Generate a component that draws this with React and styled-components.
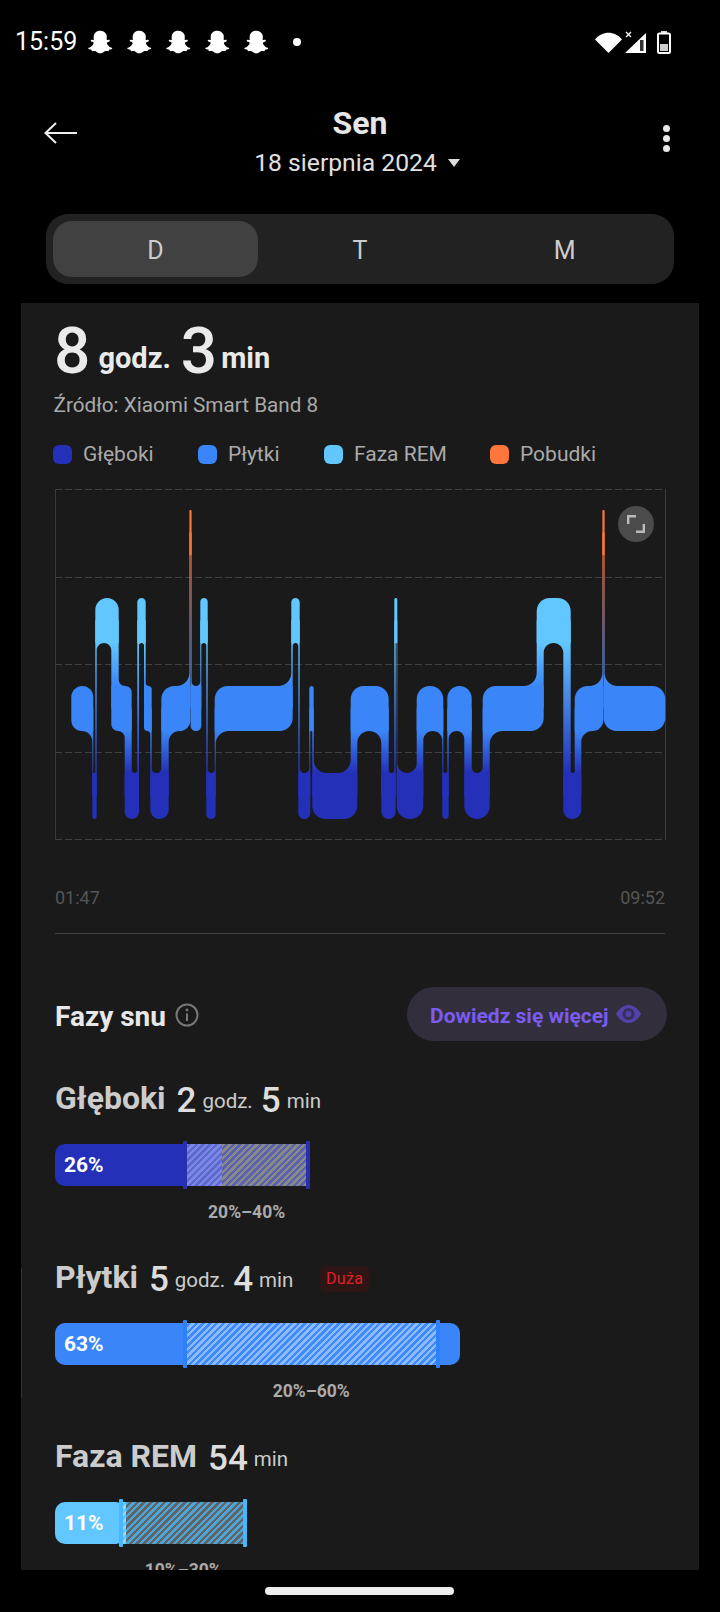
import React from 'react';
import styled, { createGlobalStyle } from 'styled-components';
import { FaSnapchatGhost } from 'react-icons/fa';

const GlobalStyle = createGlobalStyle`
  html, body { margin: 0; padding: 0; background: #000; }
  * { box-sizing: border-box; }
`;

const Page = styled.div`
  width: 720px; height: 1612px; background: #000; overflow: hidden;
  display: flex; flex-direction: column;
  font-family: Roboto, "Liberation Sans", sans-serif; color: #eee;
`;
const StatusBar = styled.div`
  height: 84px; flex: none; display: flex; align-items: center; justify-content: space-between;
  padding: 0 49px 0 15px;
`;
const StatusLeft = styled.div`display: flex; align-items: center; gap: 14.5px;`;
const Clock = styled.span`font-size: 25px; color: #fff; margin-right: -3.5px; line-height: 28px;`;
const Ghost = styled(FaSnapchatGhost)`width: 24.5px; height: 24px; color: #fff; display: block;`;
const NotifDot = styled.span`width: 8px; height: 8px; border-radius: 50%; background: #fff; margin-left: 10px;`;
const StatusRight = styled.div`display: flex; align-items: center;`;
const StatusIcon = styled.svg`display: block; flex: none; margin-left: ${p => p.$ml || 0}px;`;

const Header = styled.header`
  height: 130px; flex: none; display: grid; grid-template-columns: 1fr auto 1fr;
`;
const BackSlot = styled.div`padding: 38px 0 0 44px;`;
const MenuSlot = styled.div`display: flex; justify-content: flex-end; padding: 41px 50.5px 0 0;`;
const TitleBlock = styled.div`display: flex; flex-direction: column; align-items: center; padding-top: 21px;`;
const Title = styled.h1`margin: 0; font-size: 32px; line-height: 36px; font-weight: 700; color: #e6e6e6;`;
const DateRow = styled.div`
  display: flex; align-items: center; gap: 11px; margin: 7px 6px 0 0;
  font-size: 24.7px; line-height: 30px; color: #e0e0e0;
`;
const Caret = styled.span`
  width: 0; height: 0; border-left: 6px solid transparent; border-right: 6px solid transparent;
  border-top: 8px solid #ddd; margin-top: 0;
`;
const Kebab = styled.div`display: flex; flex-direction: column; gap: 3px;`;
const KebabDot = styled.span`width: 7px; height: 7px; border-radius: 50%; background: #e8e8e8;`;

const Segmented = styled.div`
  flex: none; height: 70px; margin: 0 46px 19px; padding: 7px; border-radius: 22px;
  background: #222; display: flex;
`;
const Segment = styled.div`
  flex: 1; display: flex; align-items: center; justify-content: center; border-radius: 19px;
  padding-top: 2px; font-size: 25px; color: #ccc; background: ${p => (p.$active ? '#414141' : 'transparent')};
`;

const Card = styled.main`
  position: relative; flex: none; height: 1267px; margin: 0 21px; padding: 17px 32px 0 34px;
  background: #1a1a1a; overflow: hidden;
`;
const ScrollThumb = styled.div`
  position: absolute; left: 0; top: 965px; width: 1px; height: 130px; background: #333;
`;
const TotalRow = styled.div`display: flex; align-items: center; height: 64px; margin-left: -1px;`;
const TotalNum = styled.span`font-size: 64px; line-height: 64px; color: #eaeaea; font-weight: 500;`;
const TotalUnit = styled.span`
  font-size: 29px; line-height: 34px; font-weight: 700; color: #eaeaea;
  margin: 12.8px ${p => p.$mr}px 0 ${p => p.$ml}px;
`;
const Source = styled.div`font-size: 20.7px; line-height: 24px; color: #aaa; margin: 9px 0 0 -1.5px;`;
const Legend = styled.div`display: flex; align-items: center; margin: 25px 0 0 -2px; height: 24px;`;
const LegendItem = styled.div`display: flex; align-items: center; gap: 11px; width: ${p => p.$w}px;`;
const Swatch = styled.span`width: 19px; height: 19px; border-radius: 6px; background: ${p => p.$c};`;
const LegendText = styled.span`font-size: 21px; color: #aaa; line-height: 24px;`;

const ChartWrap = styled.div`position: relative; width: 612px; height: 353px; margin-top: 22px;`;
const ChartSvg = styled.svg`display: block; overflow: visible;`;
const ExpandBtn = styled.div`
  position: absolute; top: 18px; right: 13px; width: 36px; height: 36px; border-radius: 50%;
  background: #4b4b4b; display: flex; align-items: center; justify-content: center;
`;
const TimeRow = styled.div`
  display: flex; justify-content: space-between; margin: 45px 2px 0 0;
  font-size: 18px; line-height: 24px; color: #555;
`;
const Divider = styled.div`height: 1px; background: #444; margin: 23px 2px 0 0;`;

const FazyRow = styled.div`display: flex; align-items: center; justify-content: space-between; margin-top: 53px; height: 54px;`;
const FazyLeft = styled.div`display: flex; align-items: center; gap: 9px;`;
const FazyTitle = styled.h2`margin: 4px 0 0; font-size: 28px; font-weight: 700; color: #e8e8e8;`;
const FazyInfo = styled.svg`display: block; margin-top: 2px;`;
const MoreBtn = styled.div`
  width: 260px; height: 54px; border-radius: 27px; background: #322e3c;
  display: flex; align-items: center; gap: 7px; padding-left: 23px;
  font-size: 21px; font-weight: 700; color: #7a5cf0;
`;
const MoreLabel = styled.span`margin-top: 4px;`;

const Phase = styled.section`padding-top: ${p => (p.$first ? 37 : 34)}px;`;
const PhaseHead = styled.div`display: flex; align-items: center; height: 40px; line-height: 40px;`;
const PhaseName = styled.span`font-size: 32px; font-weight: 700; color: #ccc; margin-right: 11px;`;
const PhaseNum = styled.span`font-size: 35px; font-weight: 500; color: #ddd; margin: 6px 6px 0 0;`;
const PhaseUnit = styled.span`font-size: 20.5px; color: #ccc; margin: 5.2px 8px 0 0;`;
const Badge = styled.span`
  margin: 4px 0 0 19px; height: 26px; padding: 0 5.5px; border-radius: 5px; background: #2e1616;
  color: #e02020; font-size: 16px; line-height: 26px; letter-spacing: 0.4px;
`;
const Track = styled.div`position: relative; width: 643px; height: 42px; margin-top: 26px;`;
const Fill = styled.div`
  height: 100%; width: ${p => p.$pct}%; background: ${p => p.$c}; border-radius: 10px;
  display: flex; align-items: center; padding-left: 9px;
  font-size: 21px; font-weight: 700; color: #fff;
`;
const Hatch = styled.div`
  position: absolute; top: 0; bottom: 0; left: ${p => p.$from}%; width: ${p => p.$w}%;
  background: repeating-linear-gradient(135deg, ${p => p.$a} 0 2.4px, ${p => p.$b} 2.4px 4.8px);
`;
const Tick = styled.span`
  position: absolute; top: -3px; bottom: -3px; left: ${p => p.$at}%; width: 4px; margin-left: -2px;
  border-radius: 1px; background: ${p => p.$c};
`;
const RangeLabel = styled.div`
  margin: 15px 0 0 ${p => p.$from}%; width: ${p => p.$w}%; max-width: 100%;
  white-space: nowrap; text-align: center;
  font-size: 17.5px; line-height: 22px; font-weight: 700; color: #aaa;
`;
const PhaseBody = styled.div`width: 643px;`;

const Footer = styled.div`flex: 1; display: flex; align-items: center; justify-content: center;`;
const HomeBar = styled.div`width: 189px; height: 8px; border-radius: 4px; background: #eee; margin-right: 1px;`;

/* ---------- sleep chart geometry ---------- */
const COL = { A: '#ff763c', R: '#62c6ff', L: '#3a86f8', D: '#2430b8' };
const TOP = { A: 510, R: 598, L: 686, D: 773 };
const BOT = { A: 555, R: 643, L: 731, D: 819 };
const RANK = { A: 3, R: 2, L: 1, D: 0 };
const MAX_R = 13;
const SEGS = [
  [71.3, 93.3, 'L'], [92.3, 96.7, 'D'], [95.3, 118.7, 'R'], [111.3, 131.7, 'L'], [124.7, 139, 'D'],
  [137.3, 145.7, 'R'], [144, 151.7, 'L'], [150.3, 168.7, 'D'], [161.3, 190.4, 'L'], [189.4, 191.6, 'A'],
  [190.6, 201.3, 'L'], [200.3, 207.7, 'R'], [206.3, 215.7, 'D'], [214.7, 292.7, 'L'], [291.3, 299.7, 'R'],
  [298.3, 310.3, 'D'], [309.3, 313.7, 'L'], [312.3, 357.3, 'D'], [350.7, 388.7, 'L'], [381.3, 395.7, 'D'],
  [394.3, 397.3, 'R'], [396.7, 423.3, 'D'], [416.7, 443.3, 'L'], [442.3, 448.7, 'D'], [447.3, 471.7, 'L'],
  [464.3, 489.7, 'D'], [482.7, 543.7, 'L'], [536.7, 570.7, 'R'], [563.3, 581.3, 'D'], [574.7, 603.4, 'L'],
  [602.4, 604.6, 'A'], [603.6, 665.3, 'L'],
];
const f = n => +n.toFixed(2);
const curve = (x0, y0, cx, cy, x1, y1) => {
  const k = 0.552;
  return `C${f(x0 + (cx - x0) * k)} ${f(y0 + (cy - y0) * k)} ${f(x1 + (cx - x1) * k)} ${f(y1 + (cy - y1) * k)} ${f(x1)} ${f(y1)}`;
};
const fillet = (X, Y, dx, dy, r) =>
  `M${f(X)} ${f(Y)}L${f(X + dx * r)} ${f(Y)}${curve(X + dx * r, Y, X, Y, X, Y + dy * r)}Z`;

function buildChart() {
  const solids = [];
  const links = [];
  const radii = SEGS.map(([x0, x1, lv], i) => {
    const p = SEGS[i - 1];
    const n = SEGS[i + 1];
    const pUp = p && RANK[p[2]] > RANK[lv];
    const nUp = n && RANK[n[2]] > RANK[lv];
    const pDn = p && RANK[p[2]] < RANK[lv];
    const nDn = n && RANK[n[2]] < RANK[lv];
    const rT = Math.min(MAX_R, ((nUp ? n[0] : x1) - (pUp ? p[1] : x0)) / 2);
    const rB = Math.min(MAX_R, ((nDn ? n[0] : x1) - (pDn ? p[1] : x0)) / 2);
    return { rT: Math.max(rT, 0.3), rB: Math.max(rB, 0.3), pUp, nUp, pDn, nDn };
  });
  SEGS.forEach(([x0, x1, lv], i) => {
    const t = TOP[lv];
    const b = BOT[lv];
    const { rT, rB, pUp, nUp, pDn, nDn } = radii[i];
    const tl = pUp ? 0 : rT;
    const tr = nUp ? 0 : rT;
    const bl = pDn ? 0 : rB;
    const br = nDn ? 0 : rB;
    solids.push({
      c: COL[lv],
      d: `M${f(x0 + tl)} ${t}L${f(x1 - tr)} ${t}${curve(x1 - tr, t, x1, t, x1, t + tr)}` +
        `L${f(x1)} ${f(b - br)}${curve(x1, b - br, x1, b, x1 - br, b)}` +
        `L${f(x0 + bl)} ${b}${curve(x0 + bl, b, x0, b, x0, b - bl)}` +
        `L${f(x0)} ${f(t + tl)}${curve(x0, t + tl, x0, t, x0 + tl, t)}Z`,
    });
    const n = SEGS[i + 1];
    if (!n) return;
    const nLv = n[2];
    const up = RANK[nLv] > RANK[lv];
    const U = up ? nLv : lv;
    const Lo = up ? lv : nLv;
    const cx0 = n[0];
    const cx1 = x1;
    const midU = (TOP[U] + BOT[U]) / 2;
    const midL = (TOP[Lo] + BOT[Lo]) / 2;
    let d = `M${f(cx0)} ${midU}L${f(cx1)} ${midU}L${f(cx1)} ${midL}L${f(cx0)} ${midL}Z`;
    d += up ? fillet(cx0, t, -1, -1, rT) : fillet(cx0, b, -1, 1, rB);
    const nr = radii[i + 1];
    d += up ? fillet(cx1, BOT[nLv], 1, 1, nr.rB) : fillet(cx1, TOP[nLv], 1, -1, nr.rT);
    links.push({ d, id: `g${U}${Lo}` });
  });
  return { solids, links };
}
const CHART = buildChart();
const GRADS = [['A', 'L'], ['R', 'L'], ['R', 'D'], ['L', 'D']];

function SleepChart() {
  return (
    <ChartSvg width="612" height="353" viewBox="55 488 612 353">
      <defs>
        {GRADS.map(([u, l]) => (
          <linearGradient key={u + l} id={`g${u}${l}`} gradientUnits="userSpaceOnUse" x1="0" x2="0" y1={BOT[u]} y2={TOP[l]}>
            <stop offset="0" stopColor={COL[u]} />
            <stop offset="1" stopColor={COL[l]} />
          </linearGradient>
        ))}
      </defs>
      <g stroke="#404040" strokeWidth="1" fill="none" strokeDasharray="7 3">
        <path d="M55 489.5H665M55 577.5H665M55 664.5H665M55 752.5H665M55 839.5H665" />
      </g>
      <path d="M55.5 489V840M665.5 489V840" stroke="#3a3a3a" strokeWidth="1" fill="none" />
      {CHART.solids.map((s, i) => <path key={i} d={s.d} fill={s.c} />)}
      {CHART.links.map((s, i) => <path key={i} d={s.d} fill={`url(#${s.id})`} />)}
    </ChartSvg>
  );
}

const PHASES = [
  {
    name: 'Głęboki', parts: [['2', 'godz.'], ['5', 'min']], pct: 26, from: 20.2, to: 39.4, range: '20%–40%',
    color: '#2430b8', tick: '#2a2fb0', over: ['#7c88e4', '#5c6ad0'], out: ['#8a8a8a', '#5a62ac'],
  },
  {
    name: 'Płytki', parts: [['5', 'godz.'], ['4', 'min']], pct: 63, from: 20.2, to: 59.5, range: '20%–60%',
    color: '#3a86f8', tick: '#2f80fb', over: ['#8cbcfb', '#3f8af8'], badge: 'Duża',
  },
  {
    name: 'Faza REM', parts: [['54', 'min']], pct: 11, from: 10.3, to: 29.6, range: '10%–30%',
    color: '#62c6ff', tick: '#45b8ff', over: ['#8fd6ff', '#62c6ff'], out: ['#4fa6d4', '#5e6468'],
  },
];

function PhaseBar({ data }) {
  const { pct, from, to, color, tick, over, out } = data;
  const inEnd = Math.min(pct, to);
  return (
    <Track>
      <Fill $pct={pct} $c={color}>{pct}%</Fill>
      {inEnd > from && <Hatch $from={from} $w={inEnd - from} $a={over[0]} $b={over[1]} />}
      {out && to > inEnd && <Hatch $from={inEnd} $w={to - inEnd} $a={out[0]} $b={out[1]} />}
      <Tick $at={from} $c={tick} />
      <Tick $at={to} $c={tick} />
    </Track>
  );
}

const Ghosts = [0, 1, 2, 3, 4];

export default function App() {
  return (
    <Page>
      <GlobalStyle />
      <StatusBar>
        <StatusLeft>
          <Clock>15:59</Clock>
          {Ghosts.map(i => <Ghost key={i} />)}
          <NotifDot />
        </StatusLeft>
        <StatusRight>
          <StatusIcon width="27" height="21" viewBox="0 0 27 21">
            <path d="M0 7.5C7 -1.5 20 -1.5 27 7.5L13.5 21Z" fill="#fff" />
          </StatusIcon>
          <StatusIcon $ml={3} width="21" height="22" viewBox="0 0 21 22">
            <path d="M0 22L21 2V22Z" fill="#fff" />
            <rect x="15" y="9" width="3.5" height="11" fill="#333" />
            <path d="M1 1L6 6M6 1L1 6" stroke="#fff" strokeWidth="1.3" />
          </StatusIcon>
          <StatusIcon $ml={11} width="14" height="23" viewBox="0 0 14 23">
            <rect x="4" y="0" width="6" height="3" fill="#ddd" />
            <rect x="1" y="2.5" width="12" height="19.5" rx="1.5" fill="#000" stroke="#fff" strokeWidth="2" />
            <rect x="3" y="13" width="8" height="7" fill="#ccc" />
          </StatusIcon>
        </StatusRight>
      </StatusBar>

      <Header>
        <BackSlot>
          <svg width="34" height="22" viewBox="0 0 34 22" style={{ display: 'block' }}>
            <path d="M1.5 11H33M12 1L1.5 11L12 21" fill="none" stroke="#eee" strokeWidth="2" />
          </svg>
        </BackSlot>
        <TitleBlock>
          <Title>Sen</Title>
          <DateRow>18 sierpnia 2024<Caret /></DateRow>
        </TitleBlock>
        <MenuSlot>
          <Kebab><KebabDot /><KebabDot /><KebabDot /></Kebab>
        </MenuSlot>
      </Header>

      <Segmented>
        <Segment $active>D</Segment>
        <Segment>T</Segment>
        <Segment>M</Segment>
      </Segmented>

      <Card>
        <ScrollThumb />
        <TotalRow>
          <TotalNum>8</TotalNum><TotalUnit $ml={8} $mr={10}>godz.</TotalUnit>
          <TotalNum>3</TotalNum><TotalUnit $ml={4} $mr={0}>min</TotalUnit>
        </TotalRow>
        <Source>Źródło: Xiaomi Smart Band 8</Source>
        <Legend>
          <LegendItem $w={145}><Swatch $c="#2430b8" /><LegendText>Głęboki</LegendText></LegendItem>
          <LegendItem $w={126}><Swatch $c="#3a86f8" /><LegendText>Płytki</LegendText></LegendItem>
          <LegendItem $w={166}><Swatch $c="#62c6ff" /><LegendText>Faza REM</LegendText></LegendItem>
          <LegendItem $w={120}><Swatch $c="#ff763c" /><LegendText>Pobudki</LegendText></LegendItem>
        </Legend>
        <ChartWrap>
          <SleepChart />
          <ExpandBtn>
            <svg width="18" height="18" viewBox="0 0 18 18">
              <path d="M1.2 9V1.2H9M16.8 9V16.8H9" fill="none" stroke="#bbb" strokeWidth="2.4" />
            </svg>
          </ExpandBtn>
        </ChartWrap>
        <TimeRow><span>01:47</span><span>09:52</span></TimeRow>
        <Divider />
        <FazyRow>
          <FazyLeft>
            <FazyTitle>Fazy snu</FazyTitle>
            <FazyInfo width="24" height="24" viewBox="0 0 24 24">
              <circle cx="12" cy="12" r="10.5" fill="none" stroke="#777" strokeWidth="2" />
              <path d="M12 10.5V18" stroke="#777" strokeWidth="2" />
              <circle cx="12" cy="7" r="1.4" fill="#777" />
            </FazyInfo>
          </FazyLeft>
          <MoreBtn>
            <MoreLabel>Dowiedz się więcej</MoreLabel>
            <svg width="25" height="18" viewBox="0 0 25 18">
              <path d="M0 9C3 3.5 7.5 0 12.5 0S22 3.5 25 9C22 14.5 17.5 18 12.5 18S3 14.5 0 9Z" fill="#5442ab" />
              <circle cx="12.5" cy="9" r="6" fill="#37305f" />
              <circle cx="12.5" cy="9" r="3" fill="#5442ab" />
            </svg>
          </MoreBtn>
        </FazyRow>
        {PHASES.map((p, i) => (
          <Phase key={p.name} $first={i === 0}>
            <PhaseHead>
              <PhaseName>{p.name}</PhaseName>
              {p.parts.map(([n, u]) => (
                <React.Fragment key={u}><PhaseNum>{n}</PhaseNum><PhaseUnit>{u}</PhaseUnit></React.Fragment>
              ))}
              {p.badge && <Badge>{p.badge}</Badge>}
            </PhaseHead>
            <PhaseBody>
              <PhaseBar data={p} />
              <RangeLabel $from={p.from} $w={p.to - p.from}>{p.range}</RangeLabel>
            </PhaseBody>
          </Phase>
        ))}
      </Card>
      <Footer><HomeBar /></Footer>
    </Page>
  );
}
